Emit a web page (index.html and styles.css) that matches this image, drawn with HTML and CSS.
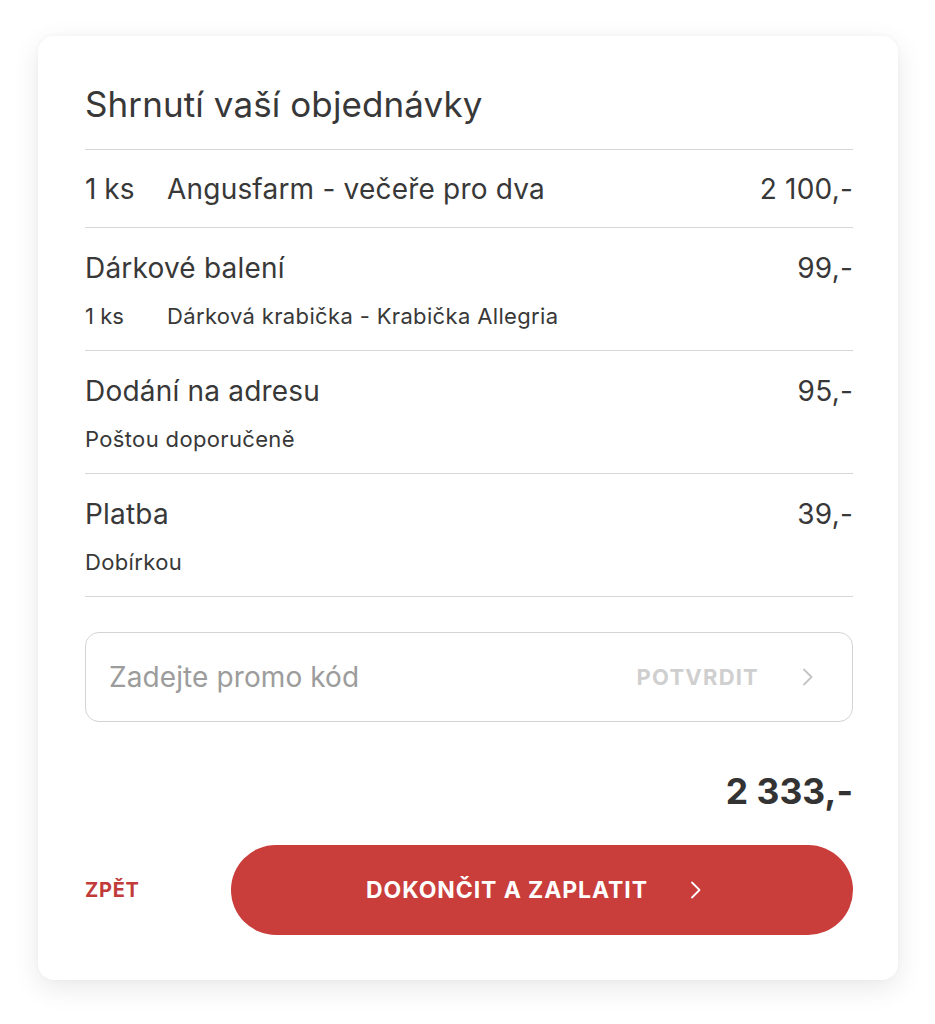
FILE: index.html
```html
<!DOCTYPE html>
<html lang="cs">
<head>
<meta charset="utf-8">
<title>Shrnutí vaší objednávky</title>
<link rel="stylesheet" href="styles.css">
</head>
<body>
<div class="page">
  <section class="card">
    <h1 class="title">Shrnutí vaší objednávky</h1>
    <div class="row row-single">
      <div class="line">
        <span class="qty">1 ks</span>
        <span class="name">Angusfarm - večeře pro dva</span>
        <span class="price">2 100,-</span>
      </div>
    </div>
    <div class="row">
      <div class="line">
        <span class="name">Dárkové balení</span>
        <span class="price">99,-</span>
      </div>
      <div class="sub">
        <span class="qty">1 ks</span>
        <span>Dárková krabička - Krabička Allegria</span>
      </div>
    </div>
    <div class="row">
      <div class="line">
        <span class="name">Dodání na adresu</span>
        <span class="price">95,-</span>
      </div>
      <div class="sub">Poštou doporučeně</div>
    </div>
    <div class="row row-last">
      <div class="line">
        <span class="name">Platba</span>
        <span class="price">39,-</span>
      </div>
      <div class="sub">Dobírkou</div>
    </div>

    <div class="promo">
      <span class="promo-placeholder">Zadejte promo kód</span>
      <span class="promo-action">
        <span class="promo-label">POTVRDIT</span>
        <svg class="chev chev-grey" width="12" height="20" viewBox="0 0 12 20"><polyline points="2,2.5 9.5,10 2,17.5" fill="none" stroke="currentColor" stroke-width="1.8" stroke-linecap="round" stroke-linejoin="round"/></svg>
      </span>
    </div>

    <div class="total">2 333,-</div>

    <div class="actions">
      <a class="back">ZPĚT</a>
      <a class="pay">
        <span class="pay-label">DOKONČIT A ZAPLATIT</span>
        <svg class="chev" width="12" height="20" viewBox="0 0 12 20"><polyline points="2,2.5 9.5,10 2,17.5" fill="none" stroke="currentColor" stroke-width="1.8" stroke-linecap="round" stroke-linejoin="round"/></svg>
      </a>
    </div>
  </section>
</div>
</body>
</html>
```

FILE: styles.css
```css
* { box-sizing: border-box; }
html, body { margin: 0; padding: 0; background: #ffffff; }
body {
  font-family: Inter, "Noto Sans", "Liberation Sans", sans-serif;
  color: #383838;
}
.page {
  padding: 36px 37px 40px 38px;
}
.card {
  background: #fff;
  border-radius: 16px;
  box-shadow: 0 8px 28px rgba(0, 0, 0, 0.09), 0 0 6px rgba(0, 0, 0, 0.03);
  padding: 48px 45px 45px 47px;
}
.title {
  margin: 0 0 25px 0;
  font-size: 35px;
  line-height: 40px;
  font-weight: 400;
  letter-spacing: 0.1px;
  color: #383838;
}
.row {
  border-top: 1px solid #d6d6d6;
  padding: 24px 0 20px 0;
}
.row-single { padding: 23px 0 22px 0; }
.row-last { border-bottom: 1px solid #d6d6d6; }
.line {
  display: flex;
  align-items: center;
  font-size: 28px;
  line-height: 32px;
  letter-spacing: 0.2px;
}
.line .name { flex: 1; }
.line .qty { width: 82px; flex: none; letter-spacing: 0; }
.price { flex: none; }
.sub {
  display: flex;
  margin-top: 18px;
  font-size: 22px;
  line-height: 28px;
  letter-spacing: 0.35px;
}
.sub .qty { width: 82px; flex: none; letter-spacing: 0; }

.promo {
  margin-top: 35px;
  height: 90px;
  border: 1.5px solid #d4d4d4;
  border-radius: 14px;
  display: flex;
  align-items: center;
  justify-content: space-between;
  padding: 0 38px 0 23px;
}
.promo-placeholder {
  font-size: 28px;
  letter-spacing: 0.1px;
  color: #9c9c9c;
}
.promo-action {
  display: flex;
  align-items: center;
  gap: 43px;
}
.promo-label {
  font-size: 22px;
  font-weight: 700;
  letter-spacing: 1.2px;
  color: #cfcfcf;
}
.chev { display: block; }
.chev-grey { color: #c4c4c4; }

.total {
  margin-top: 50px;
  text-align: right;
  font-size: 35.5px;
  line-height: 40px;
  font-weight: 700;
  color: #333;
}
.actions {
  margin-top: 33px;
  display: flex;
  align-items: center;
}
.back {
  width: 146px;
  flex: none;
  font-size: 20px;
  font-weight: 700;
  letter-spacing: 0.7px;
  color: #c13b3b;
}
.pay {
  flex: 1;
  height: 90px;
  border-radius: 45px;
  background: #c93d3b;
  color: #fff;
  display: flex;
  align-items: center;
  justify-content: center;
  gap: 42px;
  padding-right: 16px;
}
.pay-label {
  font-size: 23px;
  font-weight: 700;
  letter-spacing: 0.9px;
}
```
